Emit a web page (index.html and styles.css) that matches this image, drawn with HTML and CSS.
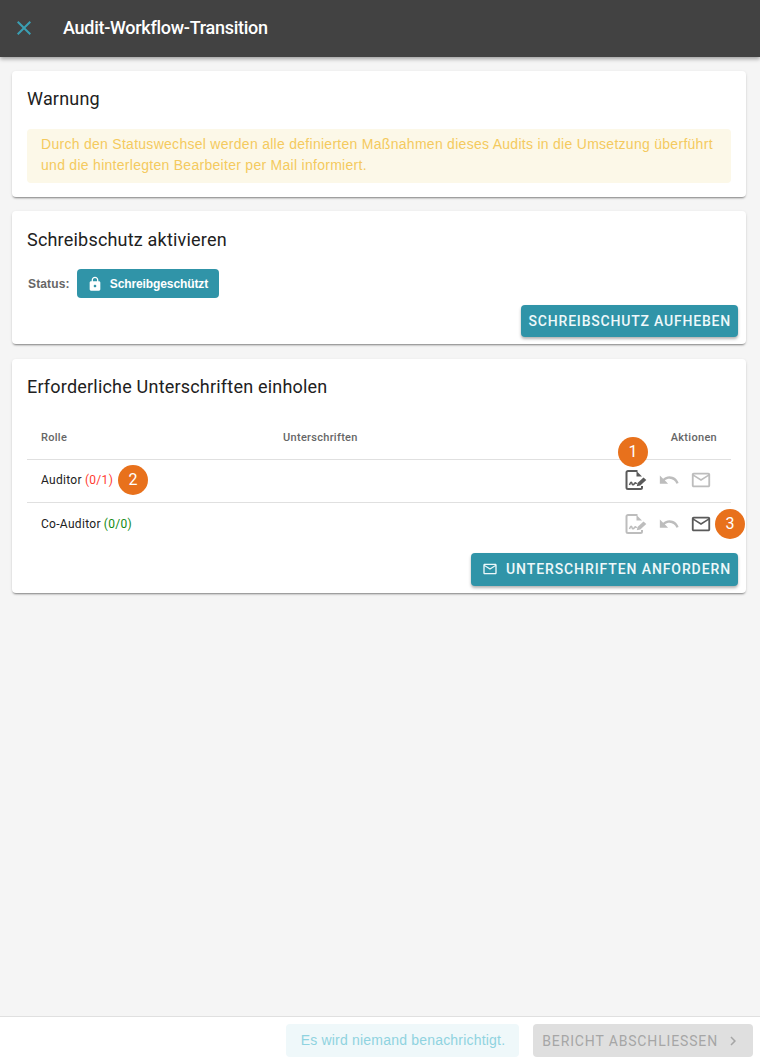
FILE: index.html
```html
<!DOCTYPE html>
<html lang="de">
<head>
<meta charset="UTF-8" />
<title>Audit-Workflow-Transition</title>
<link rel="stylesheet" href="styles.css">
</head>
<body>

<svg class="icon-defs" width="0" height="0" aria-hidden="true">
  <symbol id="i-sign" viewBox="0 0 22 20">
    <path d="M12.500 1H3a1.500 1.500 0 0 0-1.500 1.500v15A1.500 1.500 0 0 0 3 19h12.500a1.500 1.500 0 0 0 1.500-1.500V16" fill="none" stroke="currentColor" stroke-width="2"/>
    <path d="M11.500 1v5.500H17z" fill="currentColor"/>
    <path d="M4.500 15c1-3 2-3.500 2.500-1.500s1.500 1.500 2.500 0 1.500-.5 2 .5" fill="none" stroke="currentColor" stroke-width="1.500"/>
    <path d="M12.500 13l6-5.500 2.800 2.500-6 5.500-3.500 .8z" fill="currentColor"/>
  </symbol>
  <symbol id="i-undo" viewBox="0 0 24 24">
    <path d="M12.500 8c-2.650 0-5.050.99-6.900 2.600L2 7v9h9l-3.620-3.620c1.390-1.160 3.160-1.880 5.120-1.880 3.540 0 6.550 2.310 7.600 5.500l2.370-.78C21.080 11.030 17.150 8 12.500 8z" fill="currentColor"/>
  </symbol>
  <symbol id="i-mail" viewBox="0 0 24 24">
    <path d="M20 4H4c-1.100 0-2 .9-2 2v12c0 1.100.9 2 2 2h16c1.100 0 2-.9 2-2V6c0-1.100-.9-2-2-2zm0 14H4V8l8 5 8-5v10zm-8-7L4 6h16l-8 5z" fill="currentColor"/>
  </symbol>
</svg>

<header class="toolbar">
  <svg class="close-icon" viewBox="0 0 24 24"><path d="M19 6.410L17.590 5 12 10.590 6.410 5 5 6.410 10.590 12 5 17.590 6.410 19 12 13.410 17.590 19 19 17.590 13.410 12z" fill="currentColor"/></svg>
  <div class="toolbar-title">Audit-Workflow-Transition</div>
</header>

<main class="content">
  <section class="card card-warn">
    <h2>Warnung</h2>
    <div class="alert">Durch den Statuswechsel werden alle definierten Maßnahmen dieses Audits in die Umsetzung überführt und die hinterlegten Bearbeiter per Mail informiert.</div>
  </section>

  <section class="card card-lock">
    <h2>Schreibschutz aktivieren</h2>
    <div class="status-row">
      <span class="status-label">Status:</span>
      <span class="status-chip">
        <svg viewBox="0 0 24 24"><path d="M18 8h-1V6c0-2.760-2.240-5-5-5S7 3.240 7 6v2H6c-1.100 0-2 .9-2 2v10c0 1.100.9 2 2 2h12c1.100 0 2-.9 2-2V10c0-1.100-.9-2-2-2zm-6 9c-1.100 0-2-.9-2-2s.9-2 2-2 2 .9 2 2-.9 2-2 2zm3.100-9H8.900V6c0-1.710 1.390-3.100 3.100-3.100s3.100 1.390 3.100 3.100v2z" fill="currentColor"/></svg>
        Schreibgeschützt
      </span>
    </div>
    <div class="card-actions">
      <button class="btn">SCHREIBSCHUTZ AUFHEBEN</button>
    </div>
  </section>

  <section class="card card-sign">
    <h2>Erforderliche Unterschriften einholen</h2>
    <div class="sign-table">
      <div class="sign-row sign-head">
        <span class="col-role">Rolle</span>
        <span class="col-sign">Unterschriften</span>
        <span class="col-actions">Aktionen</span>
      </div>
      <div class="sign-row">
        <span class="col-role">Auditor <span class="count-open">(0/1)</span><span class="marker marker-2">2</span></span>
        <span class="col-sign"></span>
        <span class="col-actions icons">
          <span class="icon-wrap"><span class="marker marker-1">1</span><svg class="ic ic-sign"><use href="#i-sign"/></svg></span>
          <svg class="ic ic-undo off"><use href="#i-undo"/></svg>
          <svg class="ic ic-mail off"><use href="#i-mail"/></svg>
        </span>
      </div>
      <div class="sign-row sign-row-last">
        <span class="col-role">Co-Auditor <span class="count-done">(0/0)</span></span>
        <span class="col-sign"></span>
        <span class="col-actions icons">
          <svg class="ic ic-sign off"><use href="#i-sign"/></svg>
          <svg class="ic ic-undo off"><use href="#i-undo"/></svg>
          <span class="icon-wrap"><svg class="ic ic-mail"><use href="#i-mail"/></svg><span class="marker marker-3">3</span></span>
        </span>
      </div>
    </div>
    <div class="card-actions">
      <button class="btn btn-icon"><svg viewBox="0 0 24 24"><use href="#i-mail"/></svg>UNTERSCHRIFTEN ANFORDERN</button>
    </div>
  </section>
</main>

<footer class="footer">
  <div class="notice">Es wird niemand benachrichtigt.</div>
  <button class="btn-disabled">BERICHT ABSCHLIESSEN
    <svg viewBox="0 0 24 24"><path d="M10 6L8.590 7.410 13.170 12l-4.580 4.590L10 18l6-6z" fill="currentColor"/></svg>
  </button>
</footer>

</body>
</html>
```

FILE: styles.css
```css
html, body {
  margin: 0; padding: 0;
  height: 100%;
}
body {
  display: flex;
  flex-direction: column;
  height: 1062px;
  overflow: hidden;
  background: #f5f5f5;
  font-family: Roboto, 'Liberation Sans', sans-serif;
  color: #212121;
}
.icon-defs {
  position: absolute;
}
.toolbar {
  display: flex;
  align-items: center;
  flex: none;
  box-sizing: border-box;
  height: 57px;
  padding-bottom: 2px;
  background: #424242;
  color: white;
  box-shadow: 0 2px 4px rgba(0,0,0,0.35);
}
.close-icon {
  width: 24px;
  height: 24px;
  margin-left: 12px;
  color: #3a9fb3;
}
.toolbar-title {
  margin-left: 27px;
  font-size: 18px;
  font-weight: 500;
  letter-spacing: -0.28px;
}
.content {
  flex: 1;
  display: flex;
  flex-direction: column;
  gap: 14px;
  padding: 14px 14px 0 12px;
}
.card {
  position: relative;
  box-sizing: border-box;
  padding: 15px;
  background: white;
  border-radius: 4px;
  box-shadow: 0 2px 2px -1px rgba(0,0,0,0.4), 0 1px 3px rgba(0,0,0,0.12);
}
.card h2 {
  margin: 0;
  font-size: 18px;
  font-weight: 400;
  line-height: 26px;
  letter-spacing: 0.2px;
}
.card-warn { height: 126px; }
.card-lock { height: 133px; padding-top: 16px; }
.card-sign { height: 234px; margin-top: 1px; }
.alert {
  margin-top: 17px;
  padding: 5px 14px;
  height: 54px;
  box-sizing: border-box;
  background: #fcf8e8;
  border-radius: 4px;
  color: #f4ca5e;
  font-size: 14px;
  line-height: 21px;
  letter-spacing: 0.28px;
  font-family: 'Liberation Sans', sans-serif;
}
.status-row {
  display: flex;
  align-items: center;
  gap: 7px;
  margin: 16px 0 0 1px;
}
.status-label {
  color: #666;
  font-size: 12px;
  font-weight: 700;
  letter-spacing: 0.15px;
  font-family: 'Liberation Sans', sans-serif;
}
.status-chip {
  display: flex;
  align-items: center;
  gap: 7px;
  height: 29px;
  padding: 0 11px 0 10px;
  background: #3094a8;
  border-radius: 4px;
  color: white;
  font-size: 12px;
  font-weight: 700;
  letter-spacing: -0.1px;
  font-family: 'Liberation Sans', sans-serif;
}
.status-chip svg {
  width: 16px;
  height: 16px;
}
.card-actions {
  position: absolute;
  right: 8px;
  bottom: 7px;
}
.btn {
  display: flex;
  align-items: center;
  height: 32px;
  padding: 0 7px 0 8px;
  border: none;
  border-radius: 4px;
  background: #3094a8;
  color: #eef8fa;
  font-family: Roboto, sans-serif;
  font-size: 14px;
  font-weight: 500;
  letter-spacing: 0.8px;
  box-shadow: 0 2px 3px rgba(0,0,0,0.3);
}
.btn-icon {
  height: 33px;
  padding: 0 7px 2px 11px;
  letter-spacing: 0.9px;
}
.btn-icon svg {
  width: 16px;
  height: 16px;
  margin-right: 8px;
}
.sign-table {
  margin-top: 16px;
  font-size: 12px;
  letter-spacing: 0.3px;
}
.sign-row {
  display: flex;
  align-items: center;
  box-sizing: border-box;
  height: 43px;
  padding: 0 14px 2px;
  border-top: 1px solid #e0e0e0;
}
.sign-row.sign-head {
  height: 43px;
  padding-bottom: 0;
  border-top: none;
  color: #666;
  font-size: 11px;
  font-weight: 500;
}
.sign-row.sign-row-last {
  padding-bottom: 0;
}
.col-role {
  display: flex;
  align-items: center;
  gap: 3px;
  width: 242px;
  position: relative;
}
.col-sign {
  flex: 1;
}
.col-actions {
  flex: none;
  text-align: right;
}
.count-open { color: #ff3b30; }
.count-done { color: #138a13; }
.icons {
  display: flex;
  align-items: center;
  gap: 10.5px;
  margin-right: 5px;
}
.icon-wrap {
  position: relative;
  display: flex;
}
.ic {
  color: #5a5a5a;
}
.ic.off {
  color: #bdbdbd;
}
.ic-sign {
  width: 22px;
  height: 20px;
}
.ic-undo, .ic-mail {
  width: 22px;
  height: 22px;
}
.marker {
  position: absolute;
  width: 30px;
  height: 30px;
  border-radius: 50%;
  background: #e8711c;
  color: white;
  font-size: 16px;
  font-weight: 400;
  letter-spacing: 0;
  line-height: 30px;
  text-align: center;
}
.marker-1 { left: -7px; top: -33px; }
.marker-2 { left: 77px; top: -8px; }
.marker-3 { left: 25px; top: -4px; }
.footer {
  flex: none;
  display: flex;
  align-items: center;
  justify-content: flex-end;
  gap: 14px;
  box-sizing: border-box;
  height: 46px;
  padding: 7px 7px 5px 0;
  background: white;
  border-top: 1px solid #e0e0e0;
}
.notice {
  box-sizing: border-box;
  height: 33px;
  padding: 0 14px 0 15px;
  background: #eff8fa;
  border-radius: 4px;
  color: #8fd3e0;
  font-family: 'Liberation Sans', sans-serif;
  font-size: 14px;
  line-height: 33px;
  letter-spacing: 0.2px;
}
.btn-disabled {
  display: flex;
  align-items: center;
  gap: 6px;
  height: 33px;
  padding: 0 11px 0 9px;
  border: none;
  border-radius: 4px;
  background: #dfdfdf;
  color: #a6a6a6;
  font-family: Roboto, sans-serif;
  font-size: 14px;
  font-weight: 400;
  letter-spacing: 0.85px;
}
.btn-disabled svg {
  width: 18px;
  height: 18px;
}
```
